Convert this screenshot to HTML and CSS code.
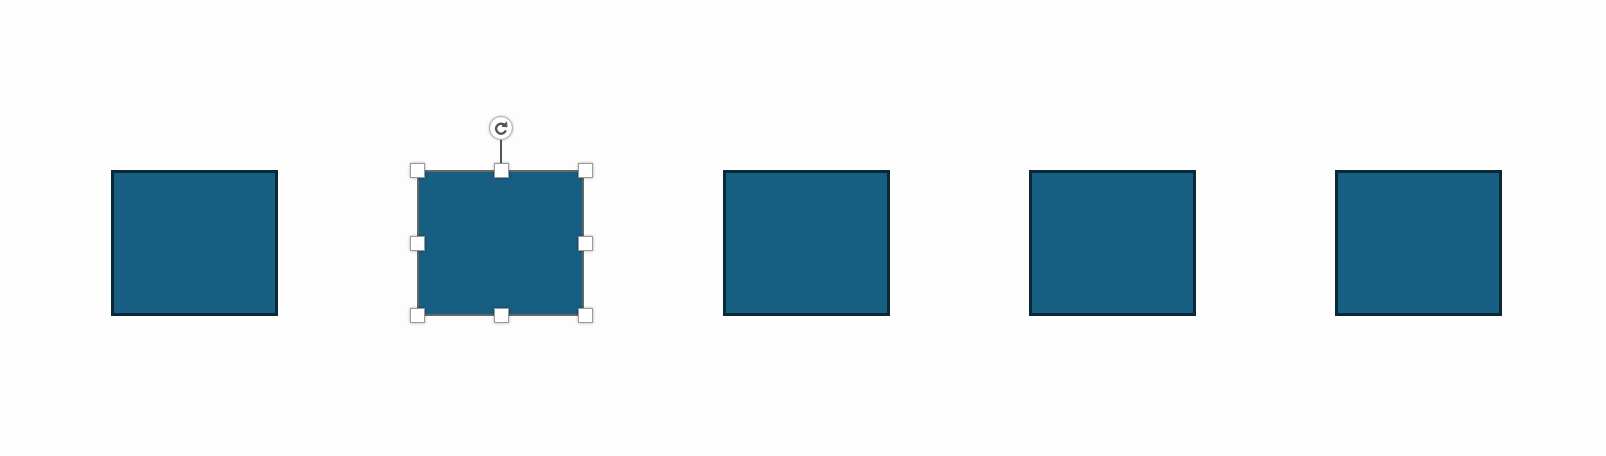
FILE: index.html
```html
<!DOCTYPE html>
<html lang="en">
<head>
    <meta charset="UTF-8">
    <meta name="viewport" content="width=device-width, initial-scale=1.0">
    <title>Shapes</title>
    <link rel="stylesheet" href="styles.css">
</head>
<body>
    <div class="canvas">
        <div class="shape"></div>
        <div class="shape selected">
            <div class="rotate-line"></div>
            <div class="rotate-handle">
                <svg width="14" height="14" viewBox="0 0 14 14">
                    <path d="M11 4.6 A5 5 0 1 0 11.8 9.4" fill="none" stroke="#555" stroke-width="2.4"/>
                    <path d="M8 5.4 L13 5.8 L12.6 1 Z" fill="#555" stroke="#555" stroke-width="1" stroke-linejoin="round"/>
                </svg>
            </div>
            <span class="handle tl"></span>
            <span class="handle tc"></span>
            <span class="handle tr"></span>
            <span class="handle ml"></span>
            <span class="handle mr"></span>
            <span class="handle bl"></span>
            <span class="handle bc"></span>
            <span class="handle br"></span>
        </div>
        <div class="shape"></div>
        <div class="shape"></div>
        <div class="shape"></div>
    </div>
</body>
</html>
```

FILE: styles.css
```css
body {
    margin: 0;
    background-color: #fdfdfd;
    font-family: Arial, sans-serif;
}
.canvas {
    display: flex;
    gap: 139px;
    padding: 170px 0 0 111px;
    height: 286px;
}
.shape {
    position: relative;
    box-sizing: border-box;
    width: 167px;
    height: 146px;
    background-color: #175f82;
    border: 3px solid #0b2838;
}
.shape.selected {
    border: 2px solid #666;
}
.handle {
    position: absolute;
    z-index: 1;
    box-sizing: border-box;
    width: 15px;
    height: 15px;
    background-color: #fff;
    border: 1px solid #999;
    box-shadow: 0 0 3px rgba(0, 0, 0, 0.3);
}
.tl, .tc, .tr { top: -9px; }
.ml, .mr { top: 64px; }
.bl, .bc, .br { bottom: -9px; }
.tl, .ml, .bl { left: -9px; }
.tc, .bc { left: 75px; }
.tr, .mr, .br { right: -11px; }
.rotate-line {
    position: absolute;
    left: 81px;
    top: -33px;
    width: 2px;
    height: 33px;
    background-color: #555;
}
.rotate-handle {
    position: absolute;
    left: 70px;
    top: -56px;
    box-sizing: border-box;
    width: 24px;
    height: 24px;
    border: 1px solid #aaa;
    border-radius: 50%;
    background-color: #fff;
    box-shadow: 0 0 3px rgba(0, 0, 0, 0.25);
    display: flex;
    align-items: center;
    justify-content: center;
}
```
